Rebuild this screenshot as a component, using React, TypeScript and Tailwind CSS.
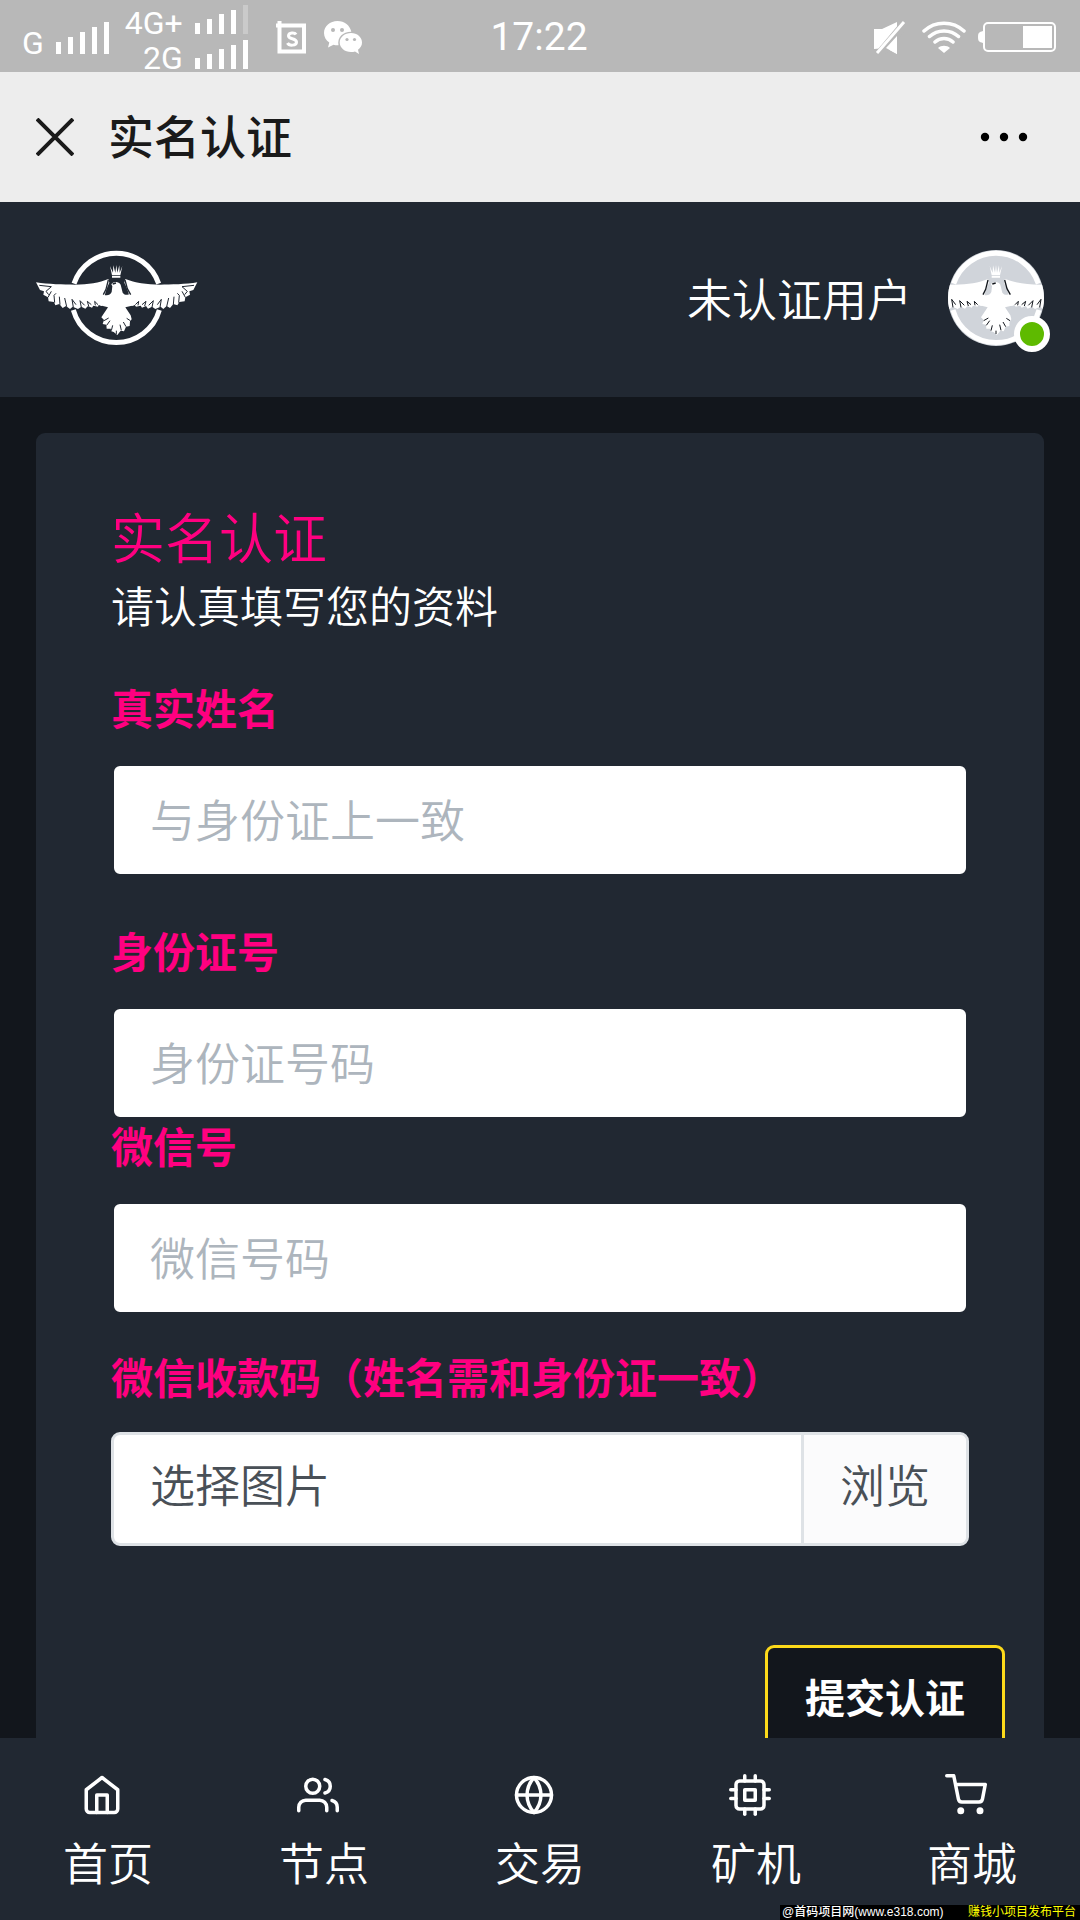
import React from 'react';
import { FiCpu, FiGlobe, FiHome, FiShoppingCart, FiUsers } from 'react-icons/fi';

interface TextFieldProps {
  id: string;
  label: string;
  placeholder: string;
  className?: string;
}

const navItems = [
  { label: '首页', icon: FiHome },
  { label: '节点', icon: FiUsers },
  { label: '交易', icon: FiGlobe },
  { label: '矿机', icon: FiCpu },
  { label: '商城', icon: FiShoppingCart },
];

// Crowned eagle in a ring, shared by the header logo and the avatar
const EagleMark: React.FC<{ viewBox: string; className?: string; line: string }> = ({ viewBox, className, line }) => (
  <svg viewBox={viewBox} className={className} aria-hidden="true">
    <path
      d="M162 155A134 134 0 0 1 416 155M418 234A134 134 0 0 1 160 234"
      fill="none"
      stroke="#fff"
      strokeWidth="15"
    />
    <path d="M270 102l9 20 1-22 6 22 3-23 3 23 6-22 1 22 8-20-6 28h-25zM276 132h25v5h-25z" fill="#fff" />
    <g fill="#fff">
      <path d="M48 151C85 157 130 158 165 158C205 158 238 152 265 141L268 152C262 164 257 176 254 192L246 222L236 219L234 224L220 221L216 227L204 222L196 230L184 224L174 231L158 224L150 231L138 222L128 228L118 216L106 220L102 210L86 208L84 196L70 188L72 178L60 174Z" />
      <path d="M532 151C500 157 450 158 420 158C380 158 345 152 316 141L313 152C319 164 324 176 328 192L335 222L344 219L348 224L362 221L366 227L378 222L384 230L396 224L406 231L422 224L430 231L440 222L450 228L460 216L472 220L478 210L494 208L496 196L510 188L508 178L520 174Z" />
    </g>
    <path
      d="M274 157C280 148 296 147 302 158L308 182C316 192 322 188 332 186L342 220L316 226L332 250L335 262L330 268L329 282L318 284L312 298L302 296L292 309L281 300L274 298L272 290L260 290L259 278L248 276L252 264L244 256L252 244L264 226L240 220L250 188C262 192 270 190 275 180L277 163Z"
      fill="#fff"
    />
    <g fill="none" stroke={line} strokeWidth="4">
      <path d="M265 144L258 172L250 188M315 144L322 170L332 188" />
      <path d="M278 156l10-3" />
    </g>
    <g fill="none" stroke={line} strokeWidth="3">
      <path d="M252 266l14-8M260 280l10-14M274 296l4-16M304 295l-4-17M318 284l-8-14M331 266l-11-7M289 306v-10" />
      <path d="M58 160l36 4-16 14 8 10M84 196l10-18M104 212l-2-22 6-6M120 218l-2-24M140 224l-6-26M160 226l-4-24 12 16M184 226l-4-20 14 14M206 222l-4-14 12 10M226 220l-2-12 10 10" />
      <path d="M522 160l-36 4 16 14-8 10M496 196l-10-18M476 212l2-22-6-6M460 218l2-24M440 224l6-26M420 226l4-24-12 16M396 226l4-20-14 14M374 222l4-14-12 10M354 220l2-12-10 10" />
    </g>
  </svg>
);

const SignalBars: React.FC<{ heights: number[]; faded?: boolean }> = ({ heights, faded }) => (
  <svg viewBox="0 0 53 32" className="h-8 w-[53px]" fill="#fff" aria-hidden="true">
    {heights.map((h, i) => (
      <rect key={i} x={i * 12} y={32 - h} width="5" height={h} opacity={faded && i === 4 ? 0.25 : 1} />
    ))}
  </svg>
);

const StatusBar: React.FC = () => (
  <div className="grid h-[72px] shrink-0 grid-cols-[1fr_auto_1fr] items-center bg-[#b8b8b8] pl-[22px] pr-6 pt-0.5 font-[Roboto,'Liberation_Sans',sans-serif] text-white">
    <div className="flex items-center">
      <div className="flex items-baseline gap-3 pt-1">
        <span className="text-[32px] leading-7">G</span>
        <SignalBars heights={[12, 17, 22, 27, 32]} />
      </div>
      <div className="ml-4 flex flex-col items-end">
        <div className="flex items-baseline gap-3">
          <span className="text-[32px] leading-7">4G+</span>
          <SignalBars heights={[11, 15, 20, 24, 29]} faded />
        </div>
        <div className="flex items-baseline gap-3">
          <span className="text-[32px] leading-7">2G</span>
          <SignalBars heights={[11, 15, 20, 24, 29]} />
        </div>
      </div>
      <svg viewBox="0 0 30 33" className="ml-7 h-[33px] w-[30px]" fill="none" stroke="#fff" aria-hidden="true">
        <path d="M0 4.500H28V30.500H3.500V0" strokeWidth="4" />
        <path d="M20 13.500C19 11.500 12.500 11 12.500 15C12.500 18.500 20.500 17 20.500 21C20.500 25 13 25 11.500 22" strokeWidth="3" />
      </svg>
      <svg viewBox="0 0 38 33" className="ml-[18px] h-[33px] w-[38px]" aria-hidden="true">
        <path d="M13.500 0C6 0 0 5.300 0 12C0 16 2 19.300 5.300 21.500L4 26.500L9.500 23.700C11 24.100 12.500 24.300 14.500 24.200C13 16.500 19 10.700 27.300 10.800C26 4.500 20.500 0 13.500 0Z" fill="#fff" />
        <path d="M27 12C20.800 12 15.700 16.200 15.700 21.500C15.700 26.800 20.800 31 27 31C28.500 31 29.800 30.800 31 30.400L35 33L34 28.800C36.500 27 38 24.500 38 21.500C38 16.200 33.200 12 27 12Z" fill="#fff" />
        <g fill="#b8b8b8">
          <circle cx="9" cy="9" r="2" />
          <circle cx="18" cy="9" r="2" />
          <circle cx="23" cy="18.500" r="1.600" />
          <circle cx="30.500" cy="18.500" r="1.600" />
        </g>
      </svg>
    </div>
    <span className="text-[39px] leading-[48px]">17:22</span>
    <div className="flex items-center justify-end">
      <svg viewBox="0 0 32 33" className="h-[33px] w-8" aria-hidden="true">
        <path d="M0 8H8L23 1V28L12 27L0 28ZM23 15V33L12 27Z" fill="#fff" />
        <path d="M31 3L5 34" stroke="#b8b8b8" strokeWidth="9" />
        <path d="M23 15V33L12 27Z" fill="#fff" />
        <path d="M30 1L3 32" stroke="#fff" strokeWidth="3" />
      </svg>
      <svg viewBox="0 0 44 33" className="ml-4 h-[33px] w-11" fill="none" stroke="#fff" strokeWidth="3.500" strokeLinecap="round" aria-hidden="true">
        <path d="M2 10C13-.5 31-.5 42 10M7.500 15.500C15.500 8 28.500 8 36.500 15.500M13 21C18 16.300 26 16.300 31 21" />
        <path d="M16 27C19 24 25 24 28 27L22 32Z" fill="#fff" stroke="none" />
      </svg>
      <svg viewBox="0 0 78 30" className="ml-3 h-[30px] w-[78px]" aria-hidden="true">
        <path d="M5 9C1 10 0 11 0 15C0 19 1 20 5 21Z" fill="#fff" />
        <rect x="6" y="1" width="71" height="28" rx="4" fill="none" stroke="#fff" strokeWidth="2" />
        <rect x="45" y="4" width="29" height="22" fill="#fff" />
      </svg>
    </div>
  </div>
);

const TextField: React.FC<TextFieldProps> = ({ id, label, placeholder, className }) => (
  <div className={className}>
    <label htmlFor={id} className="mb-[31px] block text-[42px] font-bold leading-[50px] text-[#ff0080]">
      {label}
    </label>
    <input
      id={id}
      type="text"
      placeholder={placeholder}
      className="block h-[114px] w-full rounded-[9px] border-[3px] border-[#212832] bg-white px-9 pb-1 text-[45px] font-[350] text-[#495057] outline-none placeholder:text-[#adb5bd]"
    />
  </div>
);

const App: React.FC = () => {
  return (
    <div className="relative flex h-screen flex-col overflow-hidden bg-[#12161c] font-['Noto_Sans_CJK_SC',sans-serif]">
      <StatusBar />

      <div className="flex h-[130px] shrink-0 items-center bg-[#ededed] px-9">
        <button type="button" aria-label="关闭">
          <svg viewBox="0 0 38 38" className="size-[38px]" stroke="#1a1a1a" strokeWidth="4" aria-hidden="true">
            <path d="M1 1L37 37M37 1L1 37" />
          </svg>
        </button>
        <h1 className="ml-[34px] pb-1.5 text-[46px] font-medium leading-[60px] text-[#1a1a1a]">实名认证</h1>
        <button type="button" aria-label="更多" className="ml-auto mr-4">
          <svg viewBox="0 0 48 10" className="h-[10px] w-12" aria-hidden="true">
            <circle cx="5" cy="5" r="4.200" />
            <circle cx="24" cy="5" r="4.200" />
            <circle cx="43" cy="5" r="4.200" />
          </svg>
        </button>
      </div>

      <header className="flex h-[195px] shrink-0 items-center bg-[#212832] px-9 pb-1">
        <a href="#home" aria-label="首页">
          <EagleMark viewBox="48 54 486 288" className="h-24 w-[162px]" line="#212832" />
        </a>
        <span className="ml-auto text-[45px] font-[350] leading-[60px] text-white">未认证用户</span>
        <div className="relative ml-9 size-24">
          <div className="size-24 overflow-hidden rounded-full bg-[#d0d4da]">
            <EagleMark viewBox="145 54 288 288" className="size-24" line="#12161c" />
          </div>
          <span className="absolute -bottom-1.5 -right-1.5 size-9 rounded-full border-[6px] border-white bg-[#5eba00]" />
        </div>
      </header>

      <main className="min-h-0 flex-1 overflow-y-auto px-9 pt-9 [scrollbar-width:none]">
        <form className="rounded-[9px] bg-[#212832]">
          <div className="px-[75px] pt-[68px]">
            <h2 className="text-[54px] font-[350] leading-[70px] text-[#ff0080]">实名认证</h2>
            <p className="mb-[45px] text-[43px] font-[350] leading-[66px] text-white">请认真填写您的资料</p>
            <TextField id="name" label="真实姓名" placeholder="与身份证上一致" className="mb-12" />
            <TextField id="id-number" label="身份证号" placeholder="身份证号码" />
            <TextField id="wechat" label="微信号" placeholder="微信号码" className="mb-9" />
            <label htmlFor="qrcode" className="mb-[31px] block text-[42px] font-bold leading-[50px] text-[#ff0080]">
              微信收款码（姓名需和身份证一致）
            </label>
            <label
              htmlFor="qrcode"
              className="relative flex h-[114px] overflow-hidden rounded-[9px] border-[3px] border-[#dee2e6] bg-white text-[45px] font-[350] leading-[98px] text-[#495057]"
            >
              <input id="qrcode" type="file" className="sr-only" />
              <span className="flex-1 px-9">选择图片</span>
              <span className="border-l-[3px] border-[#dee2e6] bg-[#fbfbfc] px-9">浏览</span>
            </label>
          </div>
          <div className="mt-[99px] flex justify-end px-[39px] pb-9">
            <button
              type="submit"
              className="rounded-[9px] border-[3px] border-[#fcd91a] bg-[#12161c] px-[37px] py-[18px] text-[40px] font-bold leading-[60px] text-white"
            >
              提交认证
            </button>
          </div>
        </form>
      </main>

      <nav className="grid h-[182px] shrink-0 grid-cols-5 bg-[#212832] pt-9 text-white">
        {navItems.map(({ label, icon: Icon }) => (
          <a key={label} href={`#${label}`} className="flex flex-col items-center gap-4">
            <Icon className="mr-3 size-[42px]" />
            <span className="text-[45px] font-[350] leading-[60px]">{label}</span>
          </a>
        ))}
      </nav>

      <div className="absolute bottom-0 right-0 flex h-[15px] w-[300px] items-center justify-between bg-black pl-0.5 pr-1 font-['Liberation_Sans','Noto_Sans_CJK_SC',sans-serif] text-xs leading-[15px]">
        <span className="font-medium text-white">@首码项目网(www.e318.com)</span>
        <span className="text-[#ffff00]">赚钱小项目发布平台</span>
      </div>
    </div>
  );
};

export default App;
